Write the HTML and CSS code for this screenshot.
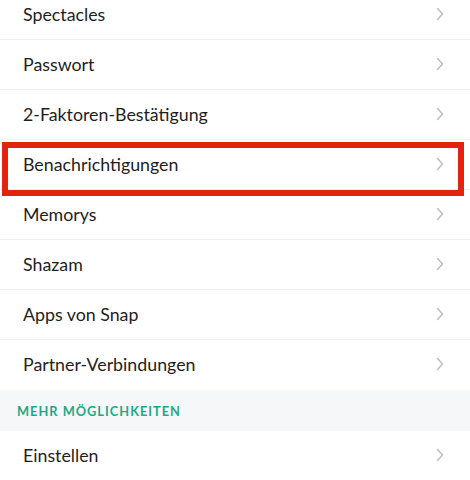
FILE: index.html
```html
<!DOCTYPE html>
<html lang="de">
<head>
    <meta charset="UTF-8">
    <meta name="viewport" content="width=device-width, initial-scale=1.0">
    <title>Einstellungen</title>
    <link rel="stylesheet" href="styles.css">
</head>
<body>
    <div id="settings">
        <ul class="menu-list">
            <li class="menu-item">Spectacles <svg class="chevron" viewBox="0 0 8 14"><polyline points="1.5,1.5 6.5,7 1.5,12.5"/></svg></li>
            <li class="menu-item">Passwort <svg class="chevron" viewBox="0 0 8 14"><polyline points="1.5,1.5 6.5,7 1.5,12.5"/></svg></li>
            <li class="menu-item">2-Faktoren-Bestätigung <svg class="chevron" viewBox="0 0 8 14"><polyline points="1.5,1.5 6.5,7 1.5,12.5"/></svg></li>
            <li class="menu-item highlighted">Benachrichtigungen <svg class="chevron" viewBox="0 0 8 14"><polyline points="1.5,1.5 6.5,7 1.5,12.5"/></svg></li>
            <li class="menu-item">Memorys <svg class="chevron" viewBox="0 0 8 14"><polyline points="1.5,1.5 6.5,7 1.5,12.5"/></svg></li>
            <li class="menu-item">Shazam <svg class="chevron" viewBox="0 0 8 14"><polyline points="1.5,1.5 6.5,7 1.5,12.5"/></svg></li>
            <li class="menu-item">Apps von Snap <svg class="chevron" viewBox="0 0 8 14"><polyline points="1.5,1.5 6.5,7 1.5,12.5"/></svg></li>
            <li class="menu-item last">Partner-Verbindungen <svg class="chevron" viewBox="0 0 8 14"><polyline points="1.5,1.5 6.5,7 1.5,12.5"/></svg></li>
        </ul>
        <div class="section-header">MEHR MÖGLICHKEITEN</div>
        <ul class="menu-list">
            <li class="menu-item last">Einstellen <svg class="chevron" viewBox="0 0 8 14"><polyline points="1.5,1.5 6.5,7 1.5,12.5"/></svg></li>
        </ul>
    </div>
</body>
</html>
```

FILE: styles.css
```css
body {
    font-family: Lato, "Open Sans", sans-serif;
    background-color: #ffffff;
    margin: 0;
    padding: 0;
    overflow: hidden;
}

#settings {
    margin-top: -10px;
}

.menu-list {
    list-style-type: none;
    margin: 0;
    padding: 0;
}

.menu-item {
    position: relative;
    display: flex;
    align-items: center;
    justify-content: space-between;
    height: 50px;
    padding: 0 26px 2px 23px;
    border-bottom: 1px solid #f1f1f3;
    box-sizing: border-box;
    font-size: 17.8px;
    color: #1e1e1e;
}

.menu-item.last {
    border-bottom: none;
}

.chevron {
    width: 8px;
    height: 14px;
    fill: none;
    stroke: #bfbfc4;
    stroke-width: 1.6;
    stroke-linecap: round;
    stroke-linejoin: round;
}

/* red marker around the selected row */
.highlighted::after {
    content: "";
    position: absolute;
    left: 2px;
    right: 6px;
    top: 2px;
    height: 54px;
    border: 6px solid #e2240c;
    box-sizing: border-box;
    pointer-events: none;
}

.section-header {
    background-color: #f6f7f9;
    height: 41px;
    display: flex;
    align-items: center;
    padding-left: 17px;
    font-size: 12.8px;
    font-weight: bold;
    letter-spacing: 1px;
    color: #1fa886;
}
```
